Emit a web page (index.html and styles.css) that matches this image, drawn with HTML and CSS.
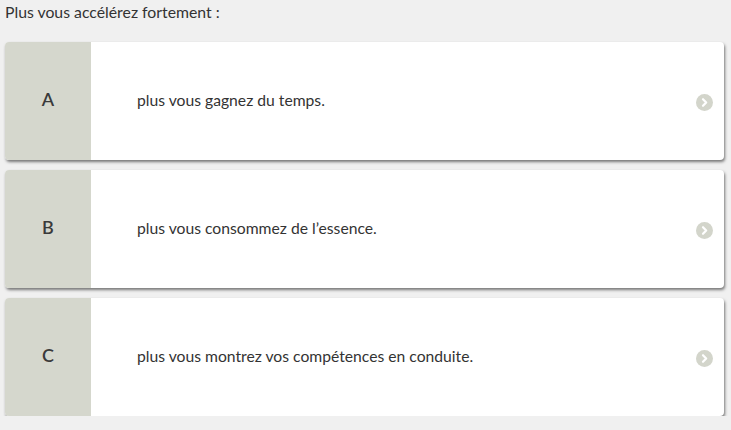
FILE: index.html
```html
<!DOCTYPE html>
<html lang="fr">
<head>
<meta charset="utf-8">
<link rel="stylesheet" href="styles.css">
</head>
<body>
<div class="page">
  <p class="question">Plus vous accélérez fortement :</p>
  <div class="answers">
    <div class="answer">
      <div class="letter">A</div>
      <div class="text">plus vous gagnez du temps.</div>
      <span class="go"><svg viewBox="0 0 17 17" width="17" height="17"><circle cx="8.5" cy="8.5" r="8.5" fill="#d3d5cb"/><path d="M7 5.2 L10.2 8.5 L7 11.8" fill="none" stroke="#fff" stroke-width="2.2" stroke-linecap="round" stroke-linejoin="round"/></svg></span>
    </div>
    <div class="answer">
      <div class="letter">B</div>
      <div class="text">plus vous consommez de l’essence.</div>
      <span class="go"><svg viewBox="0 0 17 17" width="17" height="17"><circle cx="8.5" cy="8.5" r="8.5" fill="#d3d5cb"/><path d="M7 5.2 L10.2 8.5 L7 11.8" fill="none" stroke="#fff" stroke-width="2.2" stroke-linecap="round" stroke-linejoin="round"/></svg></span>
    </div>
    <div class="answer">
      <div class="letter">C</div>
      <div class="text">plus vous montrez vos compétences en conduite.</div>
      <span class="go"><svg viewBox="0 0 17 17" width="17" height="17"><circle cx="8.5" cy="8.5" r="8.5" fill="#d3d5cb"/><path d="M7 5.2 L10.2 8.5 L7 11.8" fill="none" stroke="#fff" stroke-width="2.2" stroke-linecap="round" stroke-linejoin="round"/></svg></span>
    </div>
  </div>
</div>
</body>
</html>
```
FILE: styles.css
```css
html, body {
  margin: 0;
  padding: 0;
  background: #f0f0f0;
}
body {
  font-family: Lato, "Liberation Sans", sans-serif;
  color: #333;
}
.page {
  padding: 0 7px 0 5px;
}
.question {
  margin: 0;
  padding-top: 2px;
  font-size: 15.8px;
  line-height: 20px;
  height: 40px;
  color: #333;
}
.answers {
  display: flex;
  flex-direction: column;
  gap: 10px;
}
.answer {
  display: flex;
  align-items: center;
  height: 118px;
  background: #fff;
  border-radius: 4px;
  overflow: hidden;
  box-shadow: 1px 2px 3px rgba(0,0,0,0.5);
}
.letter {
  width: 86px;
  align-self: stretch;
  background: #d5d7cd;
  display: flex;
  align-items: center;
  justify-content: center;
  padding-bottom: 5px;
  box-sizing: border-box;
  font-size: 18px;
  font-weight: 600;
  color: #3a3a3a;
}
.text {
  flex: 1;
  padding-left: 46px;
  font-size: 15.7px;
  padding-bottom: 2px;
  color: #333;
}
.go {
  display: flex;
  margin-right: 11px;
  margin-top: 2px;
}
```
